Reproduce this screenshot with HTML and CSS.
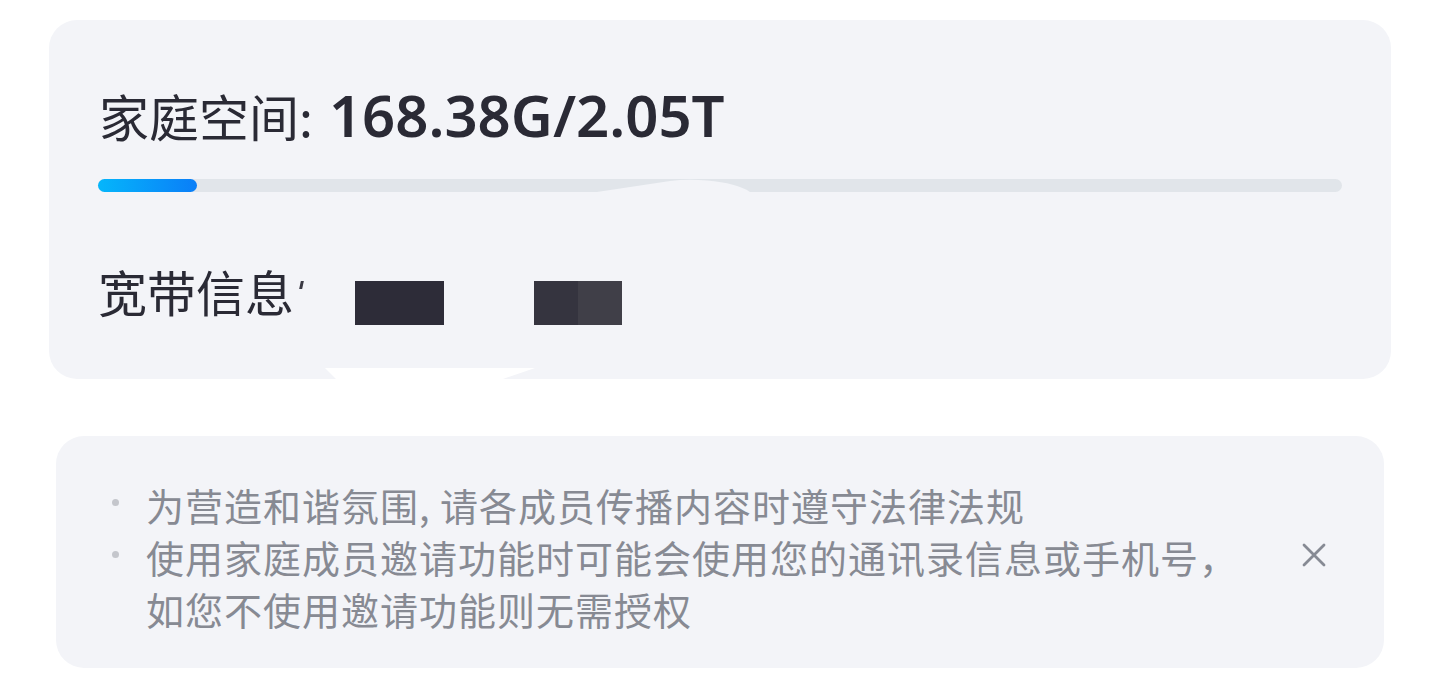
FILE: index.html
```html
<html>
  <head>
    <meta charset="utf-8" />
    <link rel="stylesheet" href="styles.css">
  </head>
  <body>
    <div class="card space-card">
      <div class="title">
        <span class="label">家庭空间:</span>
        <span class="amount">168.38G/2.05T</span>
      </div>
      <div class="bar">
        <div class="bar-fill" style="width: 99px"></div>
        <svg class="bar-smudge" width="200" height="13" viewBox="0 0 200 13">
          <path d="M0 13 L73 2 Q90 0 110 1.5 Q140 4 153 13 Z" fill="#f3f4f8" />
        </svg>
      </div>
      <div class="info">
        <span class="label">宽带信息</span>
        <span class="tick"></span>
        <span class="mask mask-a"></span>
        <span class="mask mask-b"><i></i></span>
      </div>
      <svg class="cut" width="210" height="12" viewBox="0 0 210 12">
        <path d="M0 0 L210 0 L175 12 L12 12 Z" fill="#ffffff" />
      </svg>
    </div>

    <div class="card notice">
      <ul class="rules">
        <li>为营造和谐氛围, 请各成员传播内容时遵守法律法规</li>
        <li>使用家庭成员邀请功能时可能会使用您的通讯录信息或手机号，<br />如您不使用邀请功能则无需授权</li>
      </ul>
      <svg class="close" width="24" height="24" viewBox="0 0 24 24">
        <path d="M2 2 L22 22 M22 2 L2 22" stroke="#868a94" stroke-width="2.8" stroke-linecap="round" fill="none" />
      </svg>
    </div>
  </body>
</html>
```

FILE: styles.css
```css
body {
  margin: 0;
  background: #ffffff;
  font-family: "Noto Sans", "Noto Sans CJK SC", sans-serif;
}
.card {
  background-color: #f3f4f8;
  border-radius: 28px;
  box-sizing: border-box;
  position: relative;
}
.space-card {
  margin: 20px 0 0 49px;
  width: 1342px;
  height: 359px;
  padding: 65px 49px 0 49px;
  display: flex;
  flex-direction: column;
}
.title {
  display: flex;
  align-items: center;
  height: 60px;
  color: #2a2a35;
}
.label {
  font-family: "Noto Sans CJK SC", sans-serif;
  font-size: 50px;
  color: #2a2a35;
  line-height: 60px;
  padding-left: 1px;
}
.amount {
  font-family: "Noto Sans", sans-serif;
  font-weight: 600;
  font-size: 58px;
  line-height: 60px;
  margin-left: 16px;
  letter-spacing: 0;
}
.bar {
  margin-top: 34px;
  height: 13px;
  border-radius: 7px;
  background-color: #e1e5ea;
  position: relative;
}
.bar-fill {
  height: 13px;
  border-radius: 7px;
  background: linear-gradient(90deg, #05b6fb, #0a7ef8);
}
.bar-smudge {
  position: absolute;
  left: 499px;
  top: 0;
}
.info {
  margin-top: 69px;
  display: flex;
  align-items: flex-start;
}
.info .label {
  font-size: 49px;
  padding-left: 0;
}
.tick {
  width: 3px;
  height: 8px;
  margin: 20px 0 0 6px;
  background-color: #3a3944;
  transform: skewX(-12deg);
}
.mask {
  width: 89px;
  height: 44px;
  margin-top: 20px;
  background-color: #2d2c38;
}
.mask-a {
  margin-left: 52px;
}
.mask-b {
  margin-left: 90px;
  width: 88px;
  background-color: #35343f;
  display: flex;
  justify-content: flex-end;
}
.mask-b i {
  width: 44px;
  background-color: #403f48;
}
.cut {
  position: absolute;
  left: 276px;
  bottom: -1px;
}
.notice {
  margin: 57px 0 0 56px;
  width: 1328px;
  height: 232px;
  padding: 43px 0 0 56px;
  display: flex;
  align-items: flex-start;
}
.rules {
  list-style: none;
  margin: 0;
  padding: 0;
  width: 1160px;
  font-family: "Noto Sans CJK SC", sans-serif;
  font-size: 38px;
  line-height: 52px;
  color: #878a93;
  letter-spacing: 1px;
}
.rules li {
  position: relative;
  padding-left: 34px;
}
.rules li::before {
  content: "";
  position: absolute;
  left: 0;
  top: 20px;
  width: 7px;
  height: 7px;
  border-radius: 50%;
  background-color: #c4c6cc;
}
.close {
  margin: 64px 0 0 30px;
}
```
